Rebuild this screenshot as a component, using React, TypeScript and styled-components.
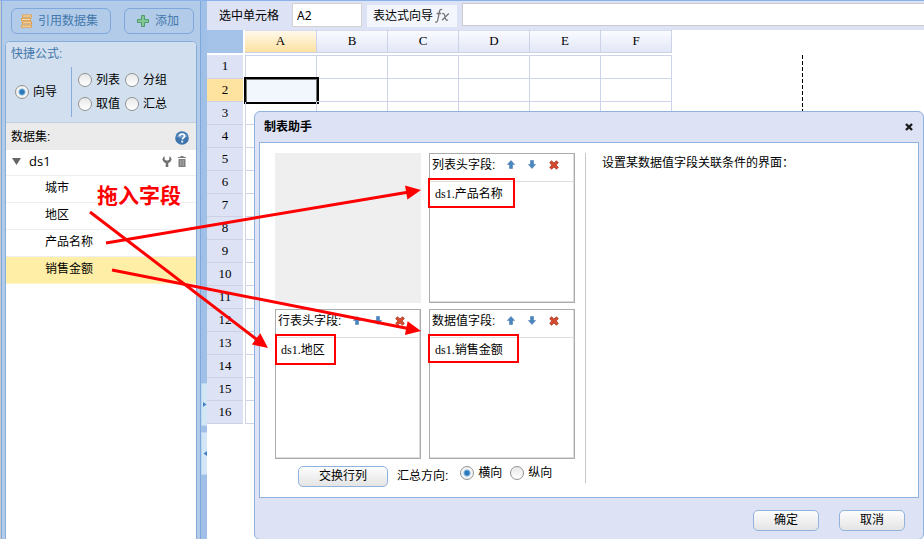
import React from "react";
import styled, { createGlobalStyle, css } from "styled-components";

const sans = `"Liberation Sans", "Noto Sans CJK SC", sans-serif`;
const serif = `"Liberation Serif", "Noto Sans CJK SC", serif`;

const GlobalStyle = createGlobalStyle`
  * { box-sizing: border-box; }
  body {
    margin: 0;
    background: #fff;
    color: #000;
    font: 12px/16px ${sans};
  }
  button, input { font: inherit; color: inherit; }
  button { cursor: pointer; }
`;

const Page = styled.div`
  position: relative;
  display: flex;
  min-height: 100vh;
  overflow: hidden;
  border-top: 1px solid #8ab1ea;
`;

/* ---------- sidebar ---------- */

const Sidebar = styled.aside`
  flex: none;
  display: flex;
  flex-direction: column;
  width: 201px;
  padding: 7px 3px 0 4px;
  background: #b1cbe9;
  border-left: 1px solid #c9cdd2;
  border-right: 1px solid #7ea8dc;
  box-shadow: inset 1px 0 #7ea8dc;
`;

const SidebarActions = styled.div`
  display: flex;
  justify-content: space-between;
  padding: 0 3px 7px 6px;
`;

const SidebarButton = styled.button`
  display: flex;
  align-items: center;
  justify-content: center;
  gap: 6px;
  height: 26px;
  padding: 0 12px 0 9px;
  border: 1px solid #7ea8dc;
  border-radius: 6px;
  background: #b1cbe9;
  color: #4478ac;
  svg { flex: none; }
`;

const AddButton = styled(SidebarButton)`
  padding: 0 14px 0 12px;
`;

const SidebarPanel = styled.div`
  flex: 1;
  display: flex;
  flex-direction: column;
  border: 1px solid #86acdc;
  border-bottom: 0;
  border-radius: 5px 5px 0 0;
  background: #fff;
  overflow: hidden;
`;

const QuickFormula = styled.fieldset`
  margin: 0;
  min-width: 0;
  height: 81px;
  padding: 0;
  border: 0;
  border-bottom: 1px solid #c3cedb;
  background: #d2dfee;
`;

const QuickTitle = styled.legend`
  float: left;
  width: 100%;
  padding: 4px 5px 0;
  color: #4478ac;
`;

const QuickBody = styled.div`
  clear: both;
  display: flex;
  align-items: center;
  height: 58px;
  padding: 2px 0 1px 9px;
`;

const QuickOptions = styled.div`
  display: grid;
  grid-template-columns: 47px 47px;
  row-gap: 8px;
  margin-left: 14px;
  padding: 5px 0;
  padding-left: 6px;
  border-left: 1px solid #86acdc;
`;

const RadioLabel = styled.label`
  display: inline-flex;
  align-items: center;
  gap: 4px;
  white-space: nowrap;
`;

const RadioInput = styled.input.attrs({ type: "radio" })`
  appearance: none;
  flex: none;
  width: 14px;
  height: 14px;
  margin: 0;
  border: 1px solid #929292;
  border-radius: 50%;
  background: linear-gradient(#e8e8e8, #fff);
  &:checked {
    background: radial-gradient(circle, #2f78b8 0 2px, #79b4e4 3px, #f4f4f4 4px);
  }
`;

const DatasetHeader = styled.div`
  display: flex;
  align-items: center;
  justify-content: space-between;
  height: 27px;
  padding: 0 7px 0 5px;
  background: #ebebeb;
`;

const IconButton = styled.button`
  display: inline-flex;
  padding: 0;
  border: 0;
  background: none;
`;

const HelpButton = styled(IconButton)`
  padding-top: 3px;
`;

const DatasetRow = styled.div`
  display: flex;
  align-items: center;
  height: 26px;
  padding: 0 10px 3px 6px;
  border-bottom: 1px solid #efefef;
`;

const DatasetName = styled.span`
  flex: 1;
  margin-left: 8px;
  font-family: "Open Sans", "Noto Sans CJK SC", sans-serif;
  font-size: 13px;
`;

const RowTools = styled.span`
  display: flex;
  gap: 6px;
`;

const FieldItems = styled.ul`
  margin: 0;
  padding: 0;
  list-style: none;
`;

const FieldItem = styled.li<{ $selected?: boolean }>`
  height: 27px;
  padding: 4px 0 0 39px;
  border-bottom: 1px solid #efefef;
  ${(p) =>
    p.$selected &&
    css`
      background: #ffefa6;
      border-bottom-color: #fff6cc;
    `}
`;

const Splitter = styled.div`
  flex: none;
  display: flex;
  flex-direction: column;
  align-items: flex-end;
  gap: 6px;
  width: 6px;
  padding-top: 382px;
  background: #a0c0e8;
`;

const SplitterHandle = styled.button`
  display: flex;
  align-items: center;
  justify-content: center;
  width: 6px;
  height: 43px;
  padding: 0;
  border: 1px solid #bcd8f0;
  border-right: 0;
  background: #d3e6f6;
`;

/* ---------- sheet ---------- */

const Main = styled.main`
  flex: 1;
  position: relative;
  display: flex;
  flex-direction: column;
  min-width: 0;
`;

const Toolbar = styled.div`
  display: flex;
  align-items: flex-start;
  height: 29px;
  padding: 2px 0 0 12px;
  background: #dde2f5;
`;

const ToolbarLabel = styled.label`
  padding-top: 5px;
  white-space: nowrap;
`;

const CellInput = styled.input`
  width: 70px;
  height: 24px;
  margin: 0 5px 0 13px;
  padding: 0 4px;
  border: 1px solid #d3d3d3;
  background: #fff;
  font-family: "Noto Sans", sans-serif;
`;

const WizardButton = styled.button`
  display: flex;
  align-items: center;
  height: 22px;
  margin: 2px 5px 0 0;
  padding: 0 7px 0 6px;
  border: 0;
  background: #f3f6fd;
  white-space: nowrap;
  svg { margin-left: 1px; }
`;

const FormulaInput = styled.input`
  flex: 1;
  min-width: 0;
  height: 23px;
  padding: 0 4px;
  border: 1px solid #c9c9cf;
  border-right: 0;
  background: #fff;
`;

const SheetArea = styled.div`
  flex: 1;
  display: flex;
`;

const Sheet = styled.table`
  flex: none;
  align-self: flex-start;
  width: 465px;
  table-layout: fixed;
  border-collapse: separate;
  border-spacing: 0;
  font: 13px/16px ${serif};
`;

const Col = styled.col<{ $w: number }>`
  width: ${(p) => p.$w}px;
`;

const Corner = styled.td`
  height: 25px;
  padding: 0;
  background: #a5c2e8;
  background-clip: padding-box;
  border-right: 2px solid #fff;
  border-bottom: 2px solid #fff;
`;

const ColumnHead = styled.th<{ $active?: boolean }>`
  height: 25px;
  padding: 0 1px 1px 0;
  font-weight: normal;
  border-bottom: 2px solid #fff;
  background: ${(p) =>
    p.$active ? "linear-gradient(#fffaf0, #fce09c)" : "linear-gradient(#fbfcff, #e1e6f6)"};
  background-clip: padding-box;
  box-shadow: inset -1px 0 #ccd2e8, inset 0 1px #d8dcec, inset 0 -1px #ccd2e8;
`;

const RowHead = styled.th<{ $active?: boolean }>`
  height: 23px;
  padding: 0 0 2px;
  font-weight: normal;
  background: ${(p) => (p.$active ? "#fde2a0" : "#dde2f5")};
  background-clip: padding-box;
  border-right: 2px solid #fff;
  box-shadow: inset 0 -1px #ccd2e4;
`;

const Cell = styled.td<{ $active?: boolean }>`
  position: relative;
  padding: 0;
  border-right: 1px solid #cdd3e8;
  border-bottom: 1px solid #cdd3e8;
  &:nth-child(2) { border-left: 1px solid #cdd3e8; }
  tr:first-child > & { height: 24px; border-top: 1px solid #cdd3e8; }
  ${(p) =>
    p.$active &&
    css`
      &::after {
        content: "";
        position: absolute;
        inset: -2px -3px -3px -2px;
        border: 2px solid #000;
        background: #f2f7fd;
        box-shadow: inset 1px 1px #777, inset -1px 0 #777;
      }
    `}
`;

const PageBreak = styled.div`
  width: 1px;
  margin: 25px 0 0 130px;
  background: repeating-linear-gradient(#000 0 4px, transparent 4px 6px);
`;

/* ---------- dialog ---------- */

const Dialog = styled.section`
  position: absolute;
  top: 110px;
  left: 47px;
  right: 0;
  display: flex;
  flex-direction: column;
  padding: 0 4px;
  border: 1px solid #8fb3dc;
  border-radius: 6px;
  background: #dde2f5;
`;

const DialogHeader = styled.header`
  display: flex;
  align-items: center;
  justify-content: space-between;
  height: 30px;
  padding: 0 6px 0 5px;
`;

const DialogTitle = styled.h1`
  margin: 0;
  font-size: 12px;
  font-weight: bold;
`;

const DialogBody = styled.div`
  display: flex;
  padding: 10px 15px;
  border: 1px solid #8fb3dc;
  background: #fff;
`;

const Layout = styled.div`
  flex: none;
  padding-right: 10px;
`;

const FieldGrid = styled.div`
  display: grid;
  grid-template-columns: 146px 146px;
  grid-auto-rows: 150px;
  gap: 6px 8px;
`;

const EmptySlot = styled.div`
  background: #efefef;
`;

const FieldBox = styled.section`
  border: 1px solid #acacac;
  box-shadow: inset -1px -1px #dcdcdc;
`;

const FieldBoxHead = styled.div`
  display: flex;
  align-items: center;
  height: 28px;
  padding: 0 15px 6px 2px;
  border-bottom: 1px solid #dedede;
`;

const FieldBoxTitle = styled.h2`
  flex: 1;
  margin: 0;
  font-size: 12px;
  font-weight: normal;
`;

const FieldBoxTools = styled.div`
  display: flex;
  align-items: center;
  gap: 13px;
`;

const FieldBoxItem = styled.div`
  padding: 4px 5px;
  font-family: ${serif};
`;

const Controls = styled.div`
  display: flex;
  align-items: center;
  padding: 6px 0 0 23px;
`;

const PushButton = styled.button<{ $wide?: boolean }>`
  width: ${(p) => (p.$wide ? 90 : 66)}px;
  height: 21px;
  padding: 0;
  line-height: 19px;
  border: 1px solid #8fb3dc;
  border-radius: 5px;
  background: linear-gradient(#fdfdfd, #e4e4e4);
`;

const Direction = styled.div`
  display: flex;
  align-items: center;
  margin-left: 9px;
`;

const DirectionChoices = styled.div`
  display: flex;
  gap: 8px;
  margin: 0 0 6px 12px;
`;

const Condition = styled.div`
  flex: 1;
  margin-bottom: 4px;
  padding: 2px 0 0 16px;
  border-left: 1px solid #c8c8c8;
`;

const DialogFooter = styled.footer`
  display: flex;
  justify-content: flex-end;
  gap: 20px;
  padding: 12px 14px 8px;
`;

/* ---------- annotations ---------- */

const Overlay = styled.div`
  position: absolute;
  top: -1px;
  left: 0;
  pointer-events: none;
  svg { display: block; }
`;

const Note = styled.strong`
  position: absolute;
  top: 182px;
  left: 97px;
  color: #f00;
  font-size: 21px;
  line-height: 28px;
  white-space: nowrap;
`;

/* ---------- icons ---------- */

const ListIcon = () => (
  <svg width="11" height="14" viewBox="0 0 11 14" fill="#fbe3b8" stroke="#e2a04c">
    <rect x="1.5" y="1" width="9" height="2" />
    <rect x="0.5" y="4.4" width="9" height="2" />
    <rect x="1.5" y="7.8" width="9" height="2" />
    <rect x="0.5" y="11.2" width="10" height="2" />
  </svg>
);

const PlusIcon = () => (
  <svg width="12" height="12" viewBox="0 0 12 12">
    <path d="M4.5 .5h3v4h4v3h-4v4h-3v-4h-4v-3h4z" fill="#83c693" stroke="#4e9c69" />
  </svg>
);

const HelpIcon = () => (
  <svg width="14" height="14" viewBox="0 0 14 14">
    <circle cx="7" cy="7" r="6.8" fill="#3f74ac" />
    <path d="M1.500 5.500a6 6 0 0 1 11 0c-3 2-8 2-11 0z" fill="#6f9dca" />
    <path d="M4.600 5.200c.1-1.500 1.100-2.200 2.500-2.200 1.500 0 2.500.8 2.500 2.100 0 1.700-2.300 1.800-2.300 3.500" fill="none" stroke="#fff" strokeWidth="1.700" />
    <rect x="6.300" y="9.700" width="1.900" height="1.800" fill="#fff" />
  </svg>
);

const TriangleIcon = () => (
  <svg width="9" height="8" viewBox="0 0 9 8">
    <path d="M0 1h9L4.500 8z" fill="#666" />
  </svg>
);

const WrenchIcon = () => (
  <svg width="10" height="11" viewBox="0 0 10 11">
    <path d="M2.600 0.300 1 1.500.4 3.800 2 6.300l1.700.7V11h2.600V7L8 6.300l1.600-2.500L9 1.500 7.400.3v3L6 4.400H4L2.600 3.300z" fill="#707070" />
  </svg>
);

const TrashIcon = () => (
  <svg width="8" height="11" viewBox="0 0 8 11">
    <path d="M0 2V1h2.500V0h3v1H8v1z" fill="#777" />
    <path d="M.5 3h7v8h-7z" fill="#7d7d7d" />
    <path d="M2.500 4v6M4 4v6M5.500 4v6" stroke="#b5b5b5" strokeWidth=".6" />
  </svg>
);

const ArrowIcon = ({ down }: { down?: boolean }) => (
  <svg width="8" height="9" viewBox="0 0 8 9">
    <path
      d={down ? "M2.500 .5h3v4H7.600L4 8.500.4 4.500h2.100z" : "M2.500 8.500h3v-4H7.600L4 .5.4 4.500h2.100z"}
      fill="#4a87c0"
      stroke="#3a6ea8"
      strokeWidth=".5"
    />
  </svg>
);

const RemoveIcon = () => (
  <svg width="10" height="10" viewBox="0 0 10 10">
    <path d="M2.500 .8 5 3 7.500.8l1.800 1.800L7.200 5l2.100 2.400-1.800 1.800L5 7 2.500 9.200.7 7.400 2.800 5 .7 2.600z" fill="#d5492f" stroke="#a93c28" strokeWidth=".8" />
  </svg>
);

const CloseIcon = () => (
  <svg width="8" height="8" viewBox="0 0 8 8">
    <path d="M1 1l6 6M7 1L1 7" stroke="#1c1c1c" strokeWidth="2.400" />
  </svg>
);

const FxIcon = () => (
  <svg width="16" height="16" viewBox="0 0 16 16" fill="none" stroke="#777" strokeWidth="1.300">
    <path d="M8.200 1.700C6.500.8 5.700 2 5.300 4L3.800 12c-.4 2-1.400 2.500-2.800 2M2.600 5.500h4.600" />
    <path d="M8.300 5.700c1.500-.6 2 .3 2.500 2.200l.7 2.700c.4 1.500 1.200 2 2.500 1.300M14.800 5.500 8 12.300" />
  </svg>
);

const HandleIcon = ({ left }: { left?: boolean }) => (
  <svg width="4" height="5" viewBox="0 0 4 5">
    <path d={left ? "M4 0v5L.5 2.500z" : "M0 0v5l3.500-2.500z"} fill="#4382c4" />
  </svg>
);

/* ---------- parts ---------- */

function Radio(props: { name: string; text: string; checked?: boolean }) {
  return (
    <RadioLabel>
      <RadioInput name={props.name} defaultChecked={props.checked} />
      {props.text}
    </RadioLabel>
  );
}

function FieldList({ title, item }: { title: string; item: string }) {
  return (
    <FieldBox>
      <FieldBoxHead>
        <FieldBoxTitle>{title}</FieldBoxTitle>
        <FieldBoxTools>
          <IconButton aria-label="上移"><ArrowIcon /></IconButton>
          <IconButton aria-label="下移"><ArrowIcon down /></IconButton>
          <IconButton aria-label="删除"><RemoveIcon /></IconButton>
        </FieldBoxTools>
      </FieldBoxHead>
      <FieldBoxItem>{item}</FieldBoxItem>
    </FieldBox>
  );
}

const columns = ["A", "B", "C", "D", "E", "F"];
const rows = Array.from({ length: 16 }, (_, i) => i + 1);
const fields = ["城市", "地区", "产品名称", "销售金额"];

const arrows = [
  { x1: 106, y1: 243, x2: 421, y2: 190 },
  { x1: 90, y1: 212, x2: 268, y2: 348 },
  { x1: 112, y1: 270, x2: 421, y2: 331 },
];
const highlights = [
  { x: 429, y: 179, width: 85, height: 28 },
  { x: 276, y: 335, width: 59, height: 29 },
  { x: 429, y: 335, width: 89, height: 27 },
];

function Annotations() {
  return (
    <Overlay>
      <svg width="924" height="538" viewBox="0 0 924 538" fill="none" stroke="#f00">
        {highlights.map((r) => (
          <rect key={`${r.x}-${r.y}`} {...r} strokeWidth="2" />
        ))}
        {arrows.map(({ x1, y1, x2, y2 }) => {
          const length = Math.hypot(x2 - x1, y2 - y1);
          const angle = (Math.atan2(y2 - y1, x2 - x1) * 180) / Math.PI;
          return (
            <g key={y1} transform={`translate(${x1} ${y1}) rotate(${angle})`}>
              <path d={`M0 0H${length - 12}`} strokeWidth="3" />
              <path d={`M${length} 0l-15-7v14z`} fill="#f00" stroke="none" />
            </g>
          );
        })}
      </svg>
      <Note>拖入字段</Note>
    </Overlay>
  );
}

export default function App() {
  return (
    <>
      <GlobalStyle />
      <Page>
        <Sidebar>
          <SidebarActions>
            <SidebarButton><ListIcon />引用数据集</SidebarButton>
            <AddButton><PlusIcon />添加</AddButton>
          </SidebarActions>
          <SidebarPanel>
            <QuickFormula>
              <QuickTitle>快捷公式:</QuickTitle>
              <QuickBody>
                <Radio name="formula" text="向导" checked />
                <QuickOptions>
                  <Radio name="formula" text="列表" />
                  <Radio name="formula" text="分组" />
                  <Radio name="formula" text="取值" />
                  <Radio name="formula" text="汇总" />
                </QuickOptions>
              </QuickBody>
            </QuickFormula>
            <DatasetHeader>
              数据集:
              <HelpButton aria-label="帮助"><HelpIcon /></HelpButton>
            </DatasetHeader>
            <DatasetRow>
              <TriangleIcon />
              <DatasetName>ds1</DatasetName>
              <RowTools>
                <IconButton aria-label="设置"><WrenchIcon /></IconButton>
                <IconButton aria-label="删除数据集"><TrashIcon /></IconButton>
              </RowTools>
            </DatasetRow>
            <FieldItems>
              {fields.map((f) => (
                <FieldItem key={f} $selected={f === "销售金额"}>{f}</FieldItem>
              ))}
            </FieldItems>
          </SidebarPanel>
        </Sidebar>
        <Splitter>
          <SplitterHandle aria-label="展开"><HandleIcon /></SplitterHandle>
          <SplitterHandle aria-label="收起"><HandleIcon left /></SplitterHandle>
        </Splitter>
        <Main>
          <Toolbar>
            <ToolbarLabel htmlFor="cell">选中单元格</ToolbarLabel>
            <CellInput id="cell" defaultValue="A2" />
            <WizardButton>表达式向导<FxIcon /></WizardButton>
            <FormulaInput aria-label="表达式" />
          </Toolbar>
          <SheetArea>
            <Sheet>
              <colgroup>
                <Col $w={38} />
                {columns.map((c) => (
                  <Col key={c} $w={c === "A" ? 72 : 71} />
                ))}
              </colgroup>
              <thead>
                <tr>
                  <Corner />
                  {columns.map((c) => (
                    <ColumnHead key={c} scope="col" $active={c === "A"}>{c}</ColumnHead>
                  ))}
                </tr>
              </thead>
              <tbody>
                {rows.map((r) => (
                  <tr key={r}>
                    <RowHead scope="row" $active={r === 2}>{r}</RowHead>
                    {columns.map((c) => (
                      <Cell key={c} $active={r === 2 && c === "A"} />
                    ))}
                  </tr>
                ))}
              </tbody>
            </Sheet>
            <PageBreak />
          </SheetArea>
          <Dialog role="dialog" aria-labelledby="dialog-title">
            <DialogHeader>
              <DialogTitle id="dialog-title">制表助手</DialogTitle>
              <IconButton aria-label="关闭"><CloseIcon /></IconButton>
            </DialogHeader>
            <DialogBody>
              <Layout>
                <FieldGrid>
                  <EmptySlot />
                  <FieldList title="列表头字段:" item="ds1.产品名称" />
                  <FieldList title="行表头字段:" item="ds1.地区" />
                  <FieldList title="数据值字段:" item="ds1.销售金额" />
                </FieldGrid>
                <Controls>
                  <PushButton $wide>交换行列</PushButton>
                  <Direction role="radiogroup" aria-labelledby="direction">
                    <span id="direction">汇总方向:</span>
                    <DirectionChoices>
                      <Radio name="direction" text="横向" checked />
                      <Radio name="direction" text="纵向" />
                    </DirectionChoices>
                  </Direction>
                </Controls>
              </Layout>
              <Condition>设置某数据值字段关联条件的界面：</Condition>
            </DialogBody>
            <DialogFooter>
              <PushButton>确定</PushButton>
              <PushButton>取消</PushButton>
            </DialogFooter>
          </Dialog>
        </Main>
        <Annotations />
      </Page>
    </>
  );
}
